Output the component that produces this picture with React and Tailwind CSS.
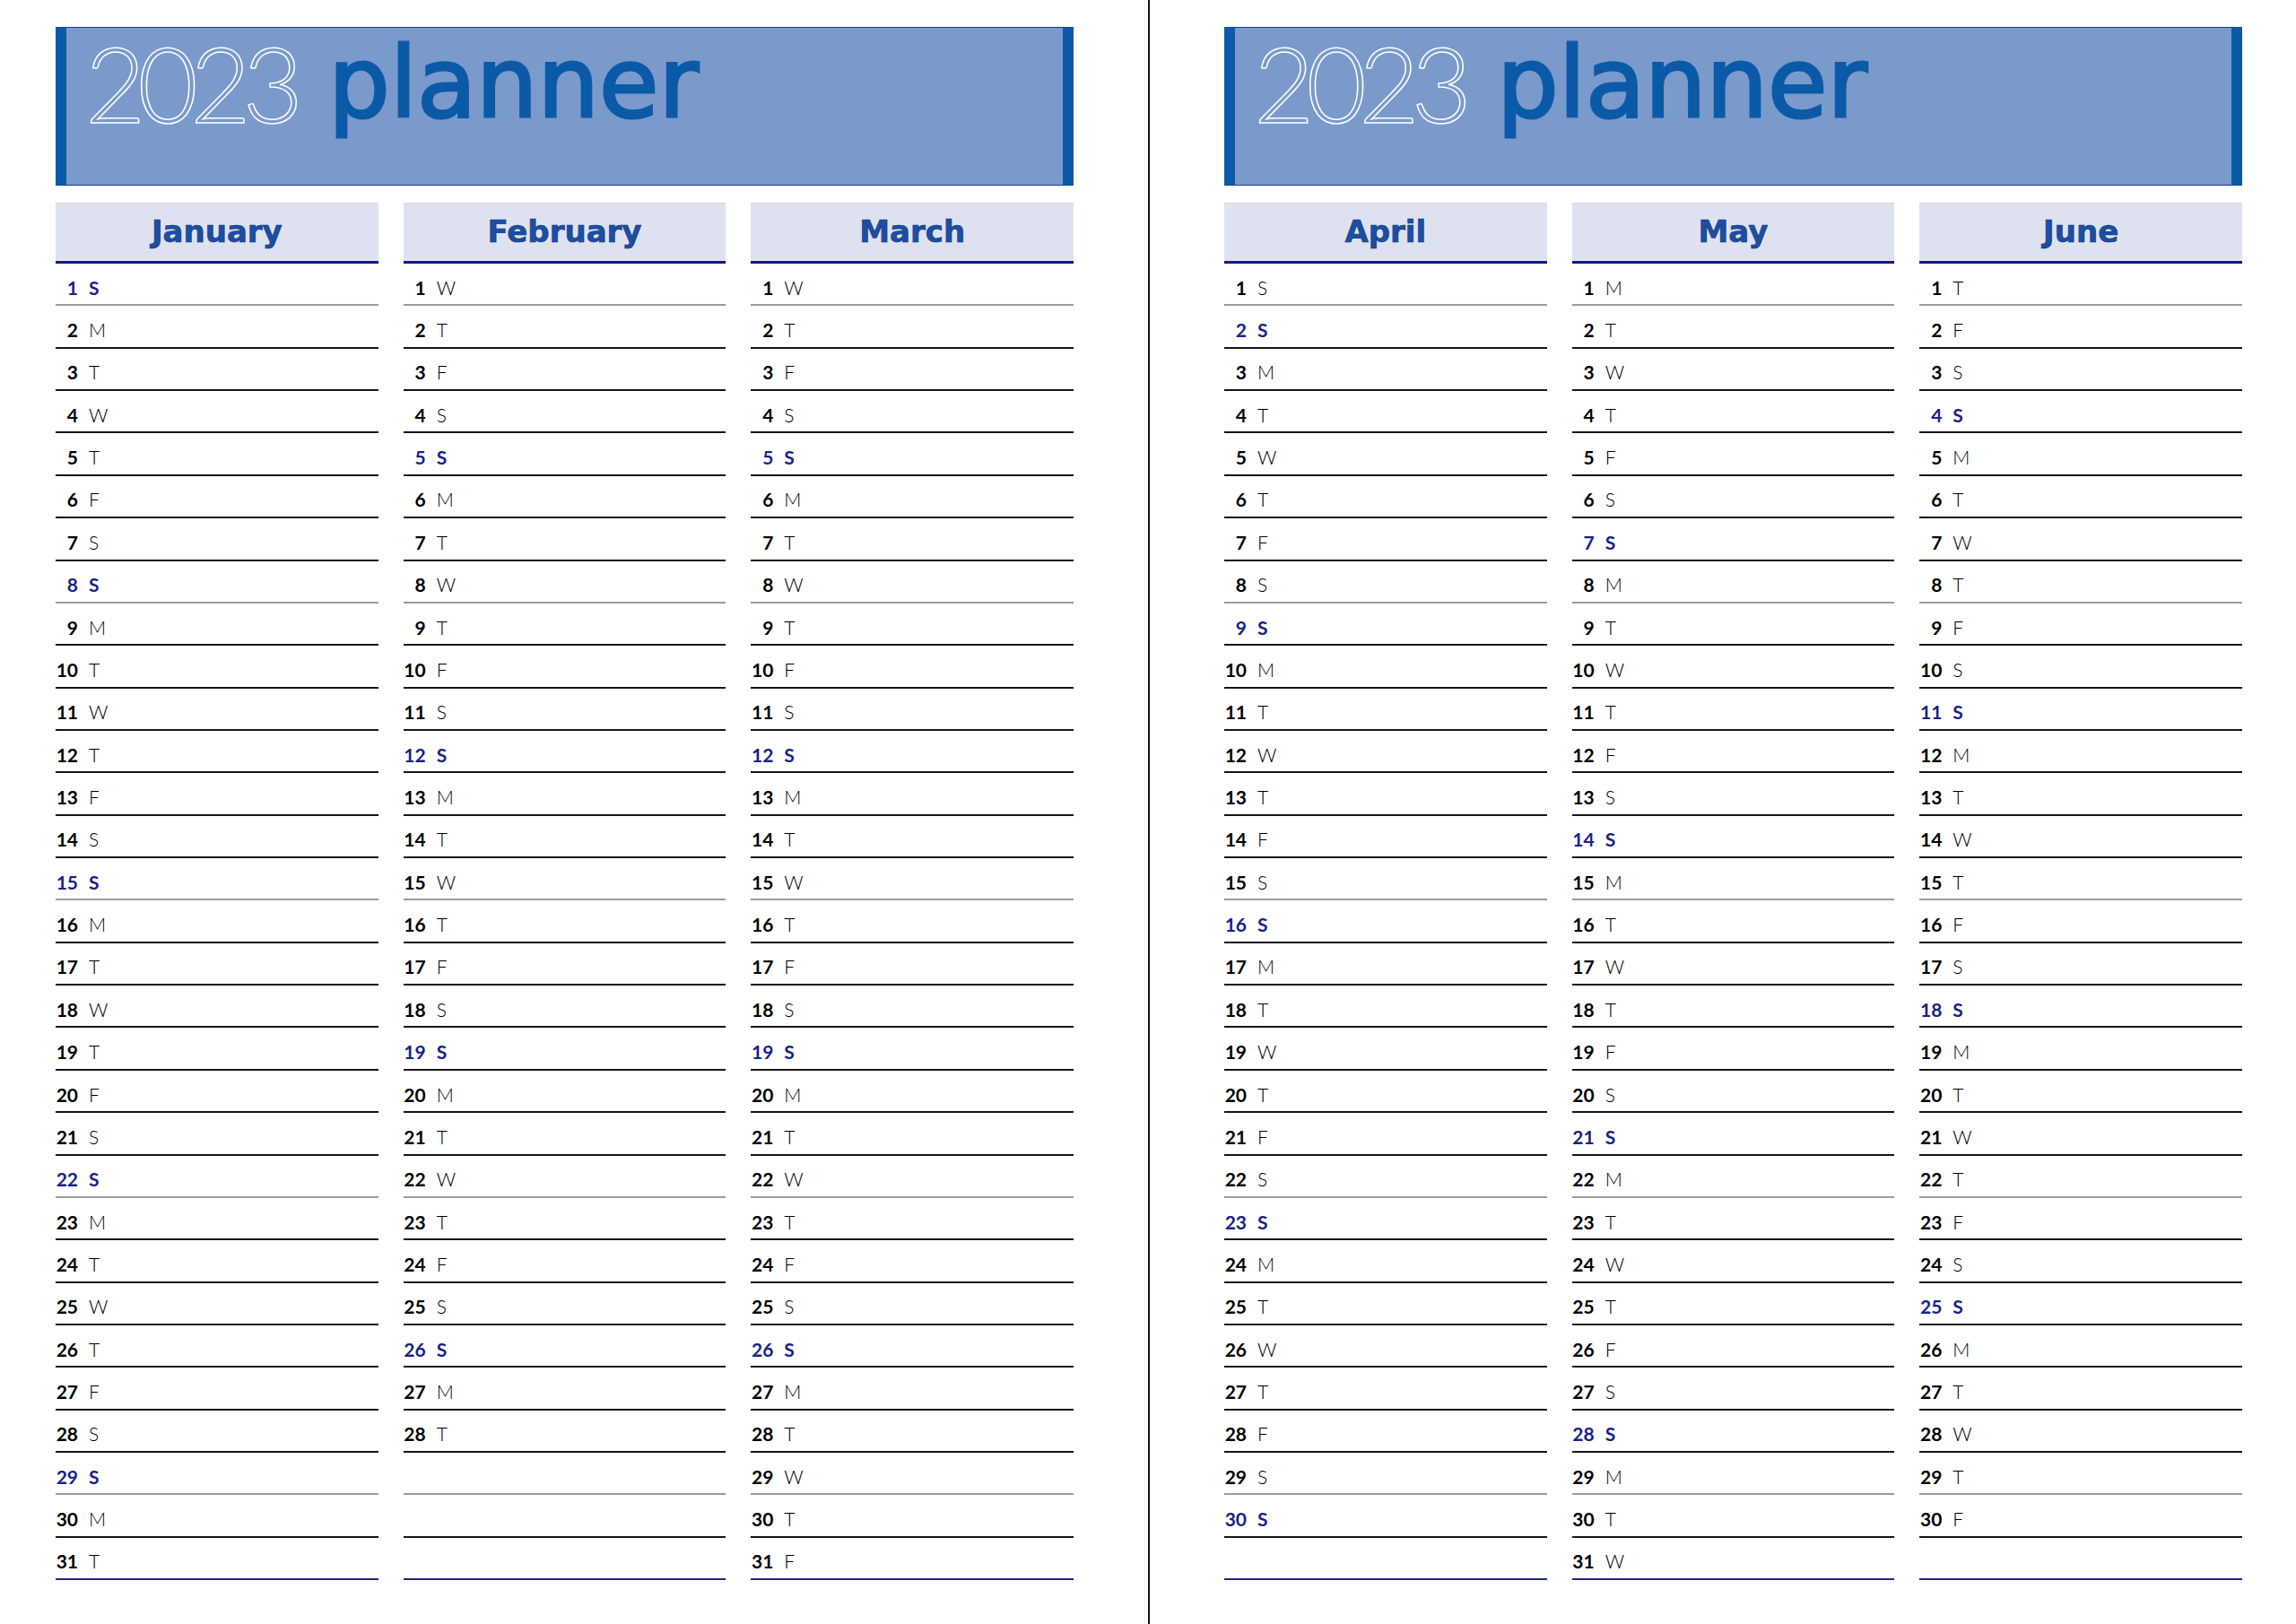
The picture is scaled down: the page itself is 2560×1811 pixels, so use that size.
import React from "react";

const NAMES = ["January", "February", "March", "April", "May", "June"];
const LETTERS = ["S", "M", "T", "W", "T", "F", "S"];

function daysIn(m) {
  return new Date(2023, m + 1, 0).getDate();
}

function Row({ m, i }) {
  const n = daysIn(m);
  const day = i + 1;
  const has = day <= n;
  const dow = has ? new Date(2023, m, day).getDay() : -1;
  const sun = dow === 0;
  const last = i === 30;
  const grey = i % 7 === 0;
  const border = last
    ? "border-[#1e2a78]"
    : grey
    ? "border-[#9c9c9c]"
    : "border-[#161616]";
  return (
    <div className={`h-[47.37px] border-b-2 ${border} flex items-center pt-[7px] text-[21px] leading-none font-['Lato',sans-serif]`}>
      {has && (
        <>
          <span className={`w-[25px] text-right font-bold ${sun ? "text-[#17228a]" : "text-black"}`}>{day}</span>
          <span className={`ml-[12px] ${sun ? "font-bold text-[#17228a]" : "font-light text-black"}`}>{LETTERS[dow]}</span>
        </>
      )}
    </div>
  );
}

function Month({ m }) {
  return (
    <div className="flex flex-col">
      <div className="h-[68px] bg-[#dee2f0] border-t border-t-[#d4d8e6] border-b-[3px] border-b-[#101c7e] flex items-center justify-center pb-[3px]">
        <span className="text-[34px] font-bold font-['DejaVu_Sans',sans-serif] text-[#1c4fa2] leading-none [-webkit-text-stroke:0.6px_#0f2f80]">{NAMES[m]}</span>
      </div>
      {Array.from({ length: 31 }, (_, i) => (
        <Row key={i} m={m} i={i} />
      ))}
    </div>
  );
}

function Page({ months }) {
  return (
    <div className="w-[1135px] flex flex-col">
      <div className="h-[177px] bg-[#7a9acb] border-y border-y-[#1b3b8c] border-x-[12px] border-x-[#0b5aa8] flex items-start pl-[21px] pt-[4px]">
        <span className="text-[116px] leading-none font-['Lato',sans-serif] font-light tracking-[-0.075em] text-transparent [-webkit-text-stroke:1.5px_white]">2023</span>
        <span className="ml-[37px] text-[108px] leading-none font-['DejaVu_Sans',sans-serif] text-[#0b5aa8] mt-[4px] [-webkit-text-stroke:3px_#0b5aa8]">planner</span>
      </div>
      <div className="mt-[19px] grid grid-cols-3 gap-x-[28px]">
        {months.map((m) => (
          <Month key={m} m={m} />
        ))}
      </div>
    </div>
  );
}

export default function App() {
  return (
    <div className="w-[2560px] h-[1811px] bg-white flex">
      <div className="w-[1280px] pl-[62px] pt-[30px]">
        <Page months={[0, 1, 2]} />
      </div>
      <div className="w-[2px] bg-[#111111] self-stretch" />
      <div className="pl-[83px] pt-[30px]">
        <Page months={[3, 4, 5]} />
      </div>
    </div>
  );
}
